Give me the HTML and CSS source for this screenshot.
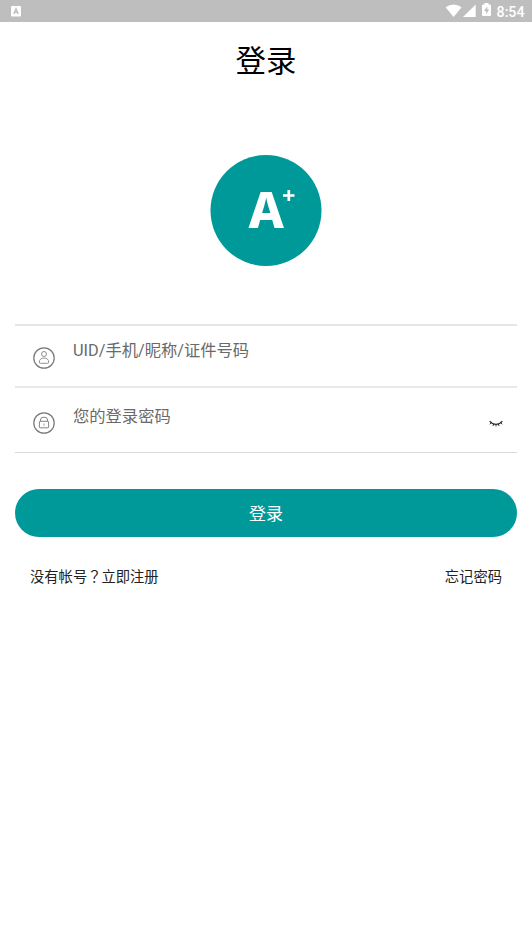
FILE: index.html
```html
<!DOCTYPE html>
<html lang="zh-CN">
<head>
<meta charset="utf-8">
<title>登录</title>
<link rel="stylesheet" href="styles.css">
</head>
<body>
<header class="status">
  <svg class="status-app" width="10" height="11" viewBox="0 0 10 11"><rect width="10" height="10.5" rx="1" fill="#fff"/><path d="M2.7 8 5 2.7 7.3 8M3.5 6.3h3" fill="none" stroke="#bebebe" stroke-width="1.3"/></svg>
  <div class="status-right">
    <svg class="signal" width="42" height="15" viewBox="0 0 42 15" fill="#fff"><path d="M.6 4.3Q8.6-1.3 16.6 4.3L8.6 14Z"/><path d="M30.7 1.5V14H18Z"/></svg>
    <svg class="battery" width="9" height="14" viewBox="0 0 9 14"><path d="M0 2.4Q0 1.5 1 1.5H2.5V0h4v1.5H8q1 0 1 .9V12q0 1-1 1H1q-1 0-1-1Z" fill="#fff"/><path d="M5.3 3.2 2 8h2.1v3.3L7.2 6.5H5.3Z" fill="#bebebe"/></svg>
    <span class="time">8:54</span>
  </div>
</header>
<main class="page">
  <h1 class="title">登录</h1>
  <svg class="logo" width="112" height="111" viewBox="0 0 112 111"><circle cx="56" cy="55.5" r="55.5" fill="#009999"/><text class="logo-letter" x="38.5" y="73.3">A</text><path d="M73 40.5H84.5M78.8 35v11" stroke="#fff" stroke-width="2.7"/></svg>
  <form class="form">
    <div class="field field-user">
      <svg class="field-icon" width="22" height="22" viewBox="0 0 22 22" fill="none" stroke="#777"><circle cx="11" cy="11" r="10.2" stroke-width="1.2"/><circle cx="11" cy="7" r="2.5" stroke-width=".8"/><path d="M6.3 15.2C6.3 12.4 8.4 11 11 11s4.7 1.4 4.7 4.2q0 1.1-1.1 1.1H7.4q-1.1 0-1.1-1.1Z" stroke-width=".8"/></svg>
      <span class="hint">UID/手机/昵称/证件号码</span>
    </div>
    <div class="field field-password">
      <svg class="field-icon" width="22" height="22" viewBox="0 0 22 22" fill="none" stroke="#777"><circle cx="11" cy="11" r="10.2" stroke-width="1.2"/><rect x="6.4" y="9.3" width="9.2" height="6.5" rx=".7" stroke-width=".9"/><path d="M7.5 9.3V8Q7.5 5.3 10 5.3h2q2.5 0 2.5 2.7v1.3" stroke-width=".9"/><path d="M11 11.5v2.3" stroke-width=".7"/></svg>
      <span class="hint">您的登录密码</span>
      <svg class="eye" width="14" height="8" viewBox="0 0 14 8" fill="none" stroke="#333"><path d="M.7 1.2Q3 4.2 7 4.4 11 4.2 13.3 1.2" stroke-width="1.2"/><path d="M2.3 2.7 .8 4.3M4.7 4 3.9 6M7 4.4v2M9.3 4l.8 2M11.7 2.7l1.5 1.6" stroke-width="1"/></svg>
    </div>
    <button class="submit" type="button">登录</button>
  </form>
  <nav class="links"><span>没有帐号<span class="mark" lang="zh-TW">？</span>立即注册</span><span>忘记密码</span></nav>
</main>
</body>
</html>
```
FILE: styles.css
```css
* { box-sizing: border-box; }
body { margin: 0; background: #fff; color: #000; font-family: Roboto, "Noto Sans CJK SC", sans-serif; }
.status { height: 22px; background: #bebebe; display: flex; justify-content: space-between; padding: 0 7.5px 0 11px; }
.status-app { margin-top: 6px; }
.status-right { display: flex; align-items: flex-start; }
.status-right .signal { margin-top: 3px; }
.status-right .battery { margin: 3px 6px 0 -5px; }
.time { color: #fff; font-size: 14.2px; line-height: 24px; font-weight: 500; }
.page { padding: 0 15px; display: flex; flex-direction: column; }
.title { margin: 18px 0 0; text-align: center; font-size: 30.4px; line-height: 44px; font-weight: 400; }
.logo { margin: 71px auto 58px; display: block; }
.logo-letter { font: 800 50px "Noto Sans", sans-serif; fill: #fff; }
.form { display: flex; flex-direction: column; border-top: 2px solid #e6e6e6; }
.field { display: flex; align-items: flex-start; padding: 0 14px 0 18px; }
.field-user { height: 62px; border-bottom: 2px solid #e9e9e9; }
.field-password { height: 65px; border-bottom: 1px solid #dadada; }
.field-icon { margin-top: 21px; }
.field-password .field-icon { margin-top: 24px; }
.hint { margin: 13px 0 0 18px; font-size: 16.3px; line-height: 24px; color: #6a6a6a; }
.field-password .hint { margin-top: 17px; }
.eye { margin: 32px 0 0 auto; }
.submit { margin-top: 36px; height: 48px; border: 0; border-radius: 24px; padding: 2px 0 0; background: #009999; color: #fff; font: 400 17px/46px Roboto, "Noto Sans CJK SC", sans-serif; }
.links { display: flex; justify-content: space-between; margin-top: 29px; padding: 0 15px; font-size: 14.3px; line-height: 22px; color: #222; }
.mark { font-family: "Noto Sans CJK TC", sans-serif; line-height: 1; }
```
